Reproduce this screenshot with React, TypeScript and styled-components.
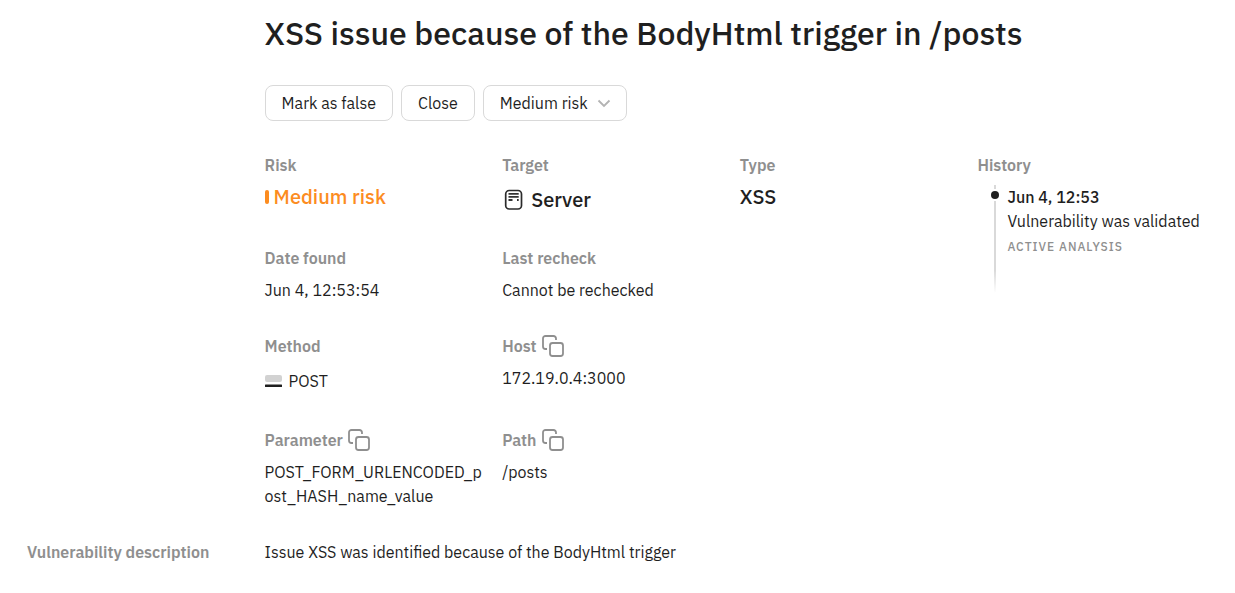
import React, { useState } from "react";
import styled, { createGlobalStyle } from "styled-components";

const ink = "#1f1f1f";
const muted = "#8f8f8f";
const line = "#d9d9d9";

const GlobalStyle = createGlobalStyle`
  *, *::before, *::after { box-sizing: border-box; }
  body {
    margin: 0;
    background: #fff;
    color: ${ink};
    font: 400 16px/24px "IBM Plex Sans", Roboto, sans-serif;
  }
  button, select { font: inherit; color: inherit; }
  h1, h2, p, dl, dt, dd, ol { margin: 0; padding: 0; }
`;

const Page = styled.main`
  display: grid;
  grid-template-columns: repeat(5, minmax(0, 1fr));
  column-gap: 16px;
  padding: 13px 36px 28px 27px;
`;

const Header = styled.header`
  grid-column: 2 / -1;
  margin-bottom: 32px;
`;

const Title = styled.h1`
  font-size: 32px;
  line-height: 40px;
  font-weight: 500;
`;

const Toolbar = styled.div`
  display: flex;
  gap: 8px;
  margin-top: 32px;
`;

const Button = styled.button`
  height: 36px;
  padding: 0 16px;
  border: 1px solid ${line};
  border-radius: 8px;
  background: #fff;
  cursor: pointer;
`;

const SelectBox = styled.label`
  position: relative;
  display: inline-flex;
`;

const Select = styled.select`
  height: 36px;
  padding: 0 38px 0 16px;
  border: 1px solid ${line};
  border-radius: 8px;
  background: #fff;
  appearance: none;
  cursor: pointer;
`;

const SelectArrow = styled.svg`
  position: absolute;
  top: 10px;
  right: 15px;
  pointer-events: none;
`;

const Facts = styled.dl`
  grid-column: 2 / 5;
  display: grid;
  grid-template-columns: repeat(3, minmax(0, 1fr));
  gap: 32px 16px;
`;

const Fact = styled.div<{ $start?: boolean }>`
  ${(p) => p.$start && "grid-column-start: 1;"}
`;

const Label = styled.dt`
  display: flex;
  align-items: center;
  gap: 5px;
  height: 24px;
  margin-bottom: 8px;
  color: ${muted};
  font-weight: 600;
`;

const Value = styled.dd`
  word-break: break-all;
`;

const Headline = styled.dd<{ $risk?: boolean }>`
  display: flex;
  align-items: center;
  gap: 5px;
  font-size: 20px;
  font-weight: 500;
  color: ${(p) => (p.$risk ? "#fc8c1f" : ink)};
`;

const TargetValue = styled(Headline)`
  height: 29px;
`;

const RiskBar = styled.span`
  width: 4px;
  height: 14px;
  border-radius: 2px;
  background: #fc8c1f;
`;

const MethodValue = styled.dd`
  display: flex;
  align-items: center;
  gap: 7px;
  height: 30px;
`;

const CopyButton = styled.button`
  display: flex;
  padding: 0;
  border: 0;
  background: none;
  color: ${muted};
  cursor: pointer;
`;

const History = styled.section`
  white-space: nowrap;
`;

const SectionTitle = styled.h2`
  color: ${muted};
  font-size: 16px;
  line-height: 24px;
  font-weight: 600;
`;

const Timeline = styled.ol`
  margin-top: 8px;
  list-style: none;
`;

const Event = styled.li`
  display: flex;
  gap: 8px;
  padding-left: 14px;
`;

const Track = styled.div`
  display: flex;
  flex-direction: column;
  align-items: center;
  gap: 2px;
  width: 8px;
  height: 108px;

  &::before {
    content: "";
    width: 2px;
    height: 4px;
    background: ${line};
  }

  &::after {
    content: "";
    width: 2px;
    flex: 1;
    background: linear-gradient(${line} 75%, transparent);
  }
`;

const Dot = styled.span`
  width: 8px;
  height: 8px;
  border-radius: 50%;
  background: ${ink};
`;

const EventTime = styled.p`
  font-weight: 500;
`;

const EventTag = styled.p`
  margin-top: 2px;
  color: ${muted};
  font-size: 12px;
  font-weight: 500;
  letter-spacing: 1px;
  text-transform: uppercase;
`;

const DescriptionTitle = styled(SectionTitle)`
  margin-top: 32px;
`;

const Description = styled.p`
  grid-column: 2 / -1;
  margin-top: 32px;
`;

function CopyIcon() {
  return (
    <svg width="22" height="22" viewBox="0 0 22 22" fill="none" stroke="currentColor" strokeWidth="1.8" aria-hidden="true">
      <path d="M5 14H3.500A2.500 2.500 0 0 1 1 11.500v-8A2.500 2.500 0 0 1 3.500 1h8A2.500 2.500 0 0 1 14 3.500V5" />
      <rect x="8" y="8" width="13" height="13" rx="2.500" />
    </svg>
  );
}

function ServerIcon() {
  return (
    <svg width="24" height="24" viewBox="0 0 24 24" fill="none" aria-hidden="true">
      <rect x="3.700" y="2.500" width="15.800" height="18.500" rx="3.500" stroke="#2b2b2b" strokeWidth="1.700" />
      <path d="M6.500 5.800h10.200M6.500 8.800h10.200M6.500 12h4M15 12h1.700" stroke="#333" strokeWidth="1.800" />
    </svg>
  );
}

function MethodIcon() {
  return (
    <svg width="17" height="12" viewBox="0 0 17 12" aria-hidden="true">
      <rect width="17" height="7" rx="2" fill="#d2d2d2" />
      <rect y="9.500" width="17" height="2.500" rx="0.500" fill={ink} />
    </svg>
  );
}

function Copy({ what }: { what: string }) {
  return (
    <CopyButton type="button" aria-label={`Copy ${what}`}>
      <CopyIcon />
    </CopyButton>
  );
}

export default function App() {
  const [risk, setRisk] = useState("Medium risk");

  return (
    <>
      <GlobalStyle />
      <Page>
        <Header>
          <Title>XSS issue because of the BodyHtml trigger in /posts</Title>
          <Toolbar>
            <Button type="button">Mark as false</Button>
            <Button type="button">Close</Button>
            <SelectBox>
              <Select aria-label="Risk level" value={risk} onChange={(e) => setRisk(e.target.value)}>
                <option>High risk</option>
                <option>Medium risk</option>
                <option>Low risk</option>
              </Select>
              <SelectArrow width="16" height="16" viewBox="0 0 16 16" fill="none" stroke="#b3b3b3" strokeWidth="1.800" aria-hidden="true">
                <path d="M2.500 5.500 8 11l5.500-5.500" />
              </SelectArrow>
            </SelectBox>
          </Toolbar>
        </Header>

        <Facts>
          <Fact>
            <Label>Risk</Label>
            <Headline $risk>
              <RiskBar />
              {risk}
            </Headline>
          </Fact>
          <Fact>
            <Label>Target</Label>
            <TargetValue>
              <ServerIcon />
              Server
            </TargetValue>
          </Fact>
          <Fact>
            <Label>Type</Label>
            <Headline>XSS</Headline>
          </Fact>
          <Fact $start>
            <Label>Date found</Label>
            <Value>Jun 4, 12:53:54</Value>
          </Fact>
          <Fact>
            <Label>Last recheck</Label>
            <Value>Cannot be rechecked</Value>
          </Fact>
          <Fact $start>
            <Label>Method</Label>
            <MethodValue>
              <MethodIcon />
              POST
            </MethodValue>
          </Fact>
          <Fact>
            <Label>
              Host
              <Copy what="host" />
            </Label>
            <Value>172.19.0.4:3000</Value>
          </Fact>
          <Fact $start>
            <Label>
              Parameter
              <Copy what="parameter" />
            </Label>
            <Value>POST_FORM_URLENCODED_post_HASH_name_value</Value>
          </Fact>
          <Fact>
            <Label>
              Path
              <Copy what="path" />
            </Label>
            <Value>/posts</Value>
          </Fact>
        </Facts>

        <History>
          <SectionTitle>History</SectionTitle>
          <Timeline>
            <Event>
              <Track>
                <Dot />
              </Track>
              <div>
                <EventTime>Jun 4, 12:53</EventTime>
                <p>Vulnerability was validated</p>
                <EventTag>Active analysis</EventTag>
              </div>
            </Event>
          </Timeline>
        </History>

        <DescriptionTitle>Vulnerability description</DescriptionTitle>
        <Description>Issue XSS was identified because of the BodyHtml trigger</Description>
      </Page>
    </>
  );
}
